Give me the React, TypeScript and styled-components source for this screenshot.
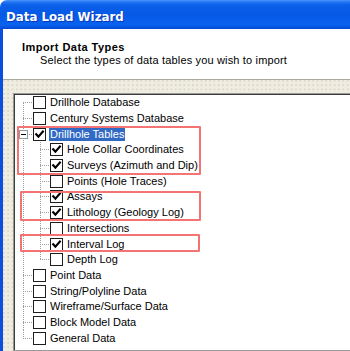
import React from 'react';
import styled, { createGlobalStyle } from 'styled-components';

const RH = 15.7;

const Global = createGlobalStyle`
  html, body { margin: 0; padding: 0; background: #ffffff; }
  body { width: 350px; height: 351px; overflow: hidden; }
`;

const Window = styled.div`
  width: 350px;
  height: 351px;
  overflow: hidden;
  display: flex;
  flex-direction: column;
  background: #ffffff;
`;

const TitleBar = styled.div`
  flex: 0 0 29px;
  box-sizing: border-box;
  padding: 9.7px 0 0 6px;
  border-top-left-radius: 7px;
  background: linear-gradient(
    180deg,
    #4a95fa 0px,
    #2475f2 2px,
    #0b60ea 5px,
    #0559e6 50%,
    #0a62ee 86%,
    #0449d4 100%
  );
  color: #ffffff;
  font: bold 11.8px/14px 'DejaVu Sans', sans-serif;
  text-shadow: 1px 1px 0 rgba(10, 24, 131, 0.55);
  white-space: nowrap;
`;

const Frame = styled.div`
  flex: 1;
  display: flex;
  flex-direction: column;
  border-left: 3px solid #0b4fe0;
  min-height: 0;
`;

const Header = styled.div`
  flex: 0 0 51px;
  box-sizing: border-box;
  padding: 11.6px 0 0 19px;
  background: #ffffff;
  border-bottom: 1px solid #aca899;
  font-family: 'Liberation Sans', Arial, sans-serif;
  color: #000000;
`;

const HeaderTitle = styled.div`
  font-size: 11px;
  line-height: 13px;
  font-weight: bold;
  letter-spacing: 0.45px;
`;

const HeaderText = styled.div`
  margin: 0.6px 0 0 18px;
  font-size: 11px;
  line-height: 13px;
  letter-spacing: 0.16px;
  white-space: nowrap;
`;

const Body = styled.div`
  flex: 1;
  display: flex;
  padding: 13px 0 0 10px;
  background-color: #efede2;
  background-image: radial-gradient(circle at 1px 1px, #dcd8c6 0.8px, transparent 1px);
  background-size: 4.3px 4.3px;
  min-height: 0;
`;

const ListBox = styled.div`
  flex: 1;
  margin-right: -30px;
  padding: 1px 0 0 1px;
  background: #ffffff;
  border: 1px solid #9a9a9a;
  box-shadow: inset 1px 1px 0 #3c3c3c;
  font-family: 'Liberation Sans', Arial, sans-serif;
  font-size: 11px;
  color: #000000;
`;

const Group = styled.div<{ $t: number; $b: number; $l: number; $w: number }>`
  position: relative;
  &::after {
    content: '';
    position: absolute;
    top: ${(p) => p.$t}px;
    bottom: ${(p) => p.$b}px;
    left: ${(p) => p.$l}px;
    width: ${(p) => p.$w}px;
    box-sizing: border-box;
    border: 2px solid #f47474;
    border-radius: 1px;
    pointer-events: none;
  }
`;

const Row = styled.div`
  display: flex;
  align-items: center;
  height: ${RH}px;
  white-space: nowrap;
`;

type Pos = 'first' | 'mid' | 'last';

const VDOT = 'repeating-linear-gradient(to bottom, #9c9c9c 0 1px, transparent 1px 2px)';
const HDOT = 'repeating-linear-gradient(to right, #9c9c9c 0 1px, transparent 1px 2px)';

const vSize = (pos: Pos) => (pos === 'mid' ? '1px 100%' : '1px 50%');
const vPos = (x: number, pos: Pos) => `${x}px ${pos === 'first' ? '100%' : '0'}`;

const Gutter = styled.div<{ $level: number; $pos: Pos }>`
  flex: 0 0 ${(p) => (p.$level === 0 ? 18 : 35)}px;
  align-self: stretch;
  display: flex;
  align-items: center;
  background-repeat: no-repeat;
  background-image: ${(p) =>
    p.$level === 0 ? `${VDOT}, ${HDOT}` : `${VDOT}, ${VDOT}, ${HDOT}`};
  background-size: ${(p) =>
    p.$level === 0
      ? `${vSize(p.$pos)}, 10px 1px`
      : `1px 100%, ${vSize(p.$pos)}, 10px 1px`};
  background-position: ${(p) =>
    p.$level === 0
      ? `${vPos(8, p.$pos)}, 8px 50%`
      : `8px 0, ${vPos(25, p.$pos)}, 25px 50%`};
`;

const Expander = styled.span`
  box-sizing: border-box;
  width: 9px;
  height: 9px;
  margin-left: 4px;
  border: 1px solid #8f9aa0;
  background: #ffffff;
  display: flex;
  align-items: center;
  justify-content: center;
`;

const Minus = styled.span`
  width: 5px;
  height: 1px;
  background: #000000;
`;

const Box = styled.span`
  box-sizing: border-box;
  flex: 0 0 13px;
  width: 13px;
  height: 13px;
  margin-right: 3px;
  border: 1px solid #1d1d1d;
  background: #ffffff;
  display: flex;
  align-items: center;
  justify-content: center;
`;

const Label = styled.span<{ $selected?: boolean }>`
  padding: 0 1px;
  height: 13px;
  line-height: 13px;
  background: ${(p) => (p.$selected ? '#316ac5' : 'transparent')};
  color: ${(p) => (p.$selected ? '#ffffff' : '#000000')};
`;

const Check = () => (
  <svg width="11" height="11" viewBox="0 0 11 11">
    <path d="M2.2 5.3 L4.4 7.6 L8.9 2.6" fill="none" stroke="#000" strokeWidth="2.1" strokeLinecap="square" />
  </svg>
);

type RowData = {
  label: string;
  level: number;
  pos: Pos;
  checked?: boolean;
  selected?: boolean;
  expander?: boolean;
  group?: number;
};

const rows: RowData[] = [
  { label: 'Drillhole Database', level: 0, pos: 'first' },
  { label: 'Century Systems Database', level: 0, pos: 'mid' },
  { label: 'Drillhole Tables', level: 0, pos: 'mid', checked: true, selected: true, expander: true, group: 1 },
  { label: 'Hole Collar Coordinates', level: 1, pos: 'mid', checked: true, group: 1 },
  { label: 'Surveys (Azimuth and Dip)', level: 1, pos: 'mid', checked: true, group: 1 },
  { label: 'Points (Hole Traces)', level: 1, pos: 'mid' },
  { label: 'Assays', level: 1, pos: 'mid', checked: true, group: 2 },
  { label: 'Lithology (Geology Log)', level: 1, pos: 'mid', checked: true, group: 2 },
  { label: 'Intersections', level: 1, pos: 'mid' },
  { label: 'Interval Log', level: 1, pos: 'mid', checked: true, group: 3 },
  { label: 'Depth Log', level: 1, pos: 'last' },
  { label: 'Point Data', level: 0, pos: 'mid' },
  { label: 'String/Polyline Data', level: 0, pos: 'mid' },
  { label: 'Wireframe/Surface Data', level: 0, pos: 'mid' },
  { label: 'Block Model Data', level: 0, pos: 'mid' },
  { label: 'General Data', level: 0, pos: 'last' },
];

const boxes: Record<number, { t: number; b: number; l: number; w: number }> = {
  1: { t: 0.1, b: -2, l: 2, w: 184 },
  2: { t: 1.8, b: -0.4, l: 5, w: 181 },
  3: { t: -1.8, b: 0, l: 5, w: 180 },
};

const TreeRow = ({ r }: { r: RowData }) => (
  <Row>
    <Gutter $level={r.level} $pos={r.pos}>
      {r.expander && (
        <Expander>
          <Minus />
        </Expander>
      )}
    </Gutter>
    <Box>{r.checked && <Check />}</Box>
    <Label $selected={r.selected}>{r.label}</Label>
  </Row>
);

export default function App() {
  const segments: { group?: number; rows: RowData[] }[] = [];
  rows.forEach((r) => {
    const last = segments[segments.length - 1];
    if (last && last.group !== undefined && last.group === r.group) last.rows.push(r);
    else segments.push({ group: r.group, rows: [r] });
  });

  return (
    <>
      <Global />
      <Window>
        <TitleBar>Data Load Wizard</TitleBar>
        <Frame>
          <Header>
            <HeaderTitle>Import Data Types</HeaderTitle>
            <HeaderText>Select the types of data tables you wish to import</HeaderText>
          </Header>
          <Body>
            <ListBox>
              {segments.map((s, i) =>
                s.group !== undefined ? (
                  <Group key={i} $t={boxes[s.group].t} $b={boxes[s.group].b} $l={boxes[s.group].l} $w={boxes[s.group].w}>
                    {s.rows.map((r) => (
                      <TreeRow key={r.label} r={r} />
                    ))}
                  </Group>
                ) : (
                  s.rows.map((r) => <TreeRow key={r.label} r={r} />)
                )
              )}
            </ListBox>
          </Body>
        </Frame>
      </Window>
    </>
  );
}
